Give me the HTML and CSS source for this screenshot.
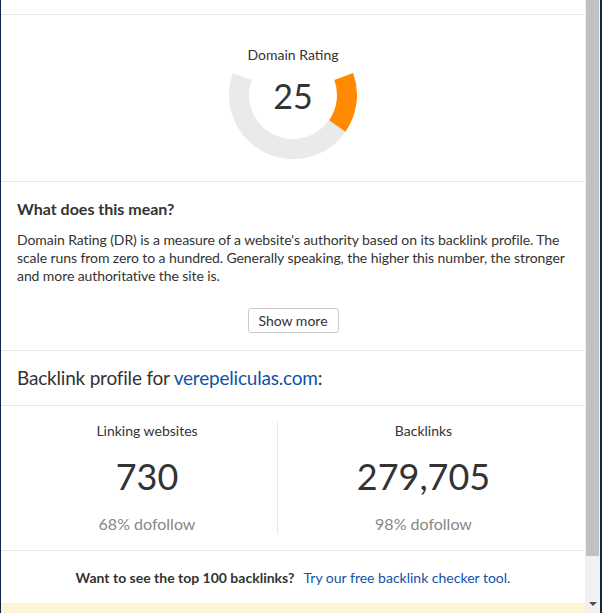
FILE: index.html
```html
<!DOCTYPE html>
<html lang="en">
<head>
<meta charset="utf-8">
<title>Domain Rating</title>
<link rel="stylesheet" href="styles.css">
</head>
<body>
<div class="frame">
  <div class="edge"></div>
  <main class="panel">
    <div class="prev-section"></div>

    <section class="dr">
      <div class="dr-label">Domain Rating</div>
      <div class="gauge">
        <svg class="gauge-svg" width="128" height="88" viewBox="0 40 128 88" aria-hidden="true">
          <path d="M108.24 94.97 A54 54 0 0 1 13.26 45.53" fill="none" stroke="#eaeaec" stroke-width="20"/>
          <path d="M114.74 45.53 A54 54 0 0 1 108.24 94.97" fill="none" stroke="#ff8a00" stroke-width="20"/>
        </svg>
        <div class="gauge-value">25</div>
      </div>
    </section>

    <section class="meaning">
      <h3 class="meaning-title">What does this mean?</h3>
      <p class="meaning-text">Domain Rating (DR) is a measure of a website's authority based on its backlink profile. The scale runs from zero to a hundred. Generally speaking, the higher this number, the stronger and more authoritative the site is.</p>
      <div class="more-row"><button class="more-btn" type="button">Show more</button></div>
    </section>

    <section class="profile">
      <h2 class="profile-title">Backlink profile for <a class="link" href="#">verepeliculas.com</a>:</h2>
    </section>

    <section class="stats">
      <div class="stat">
        <div class="stat-label">Linking websites</div>
        <div class="stat-value">730</div>
        <div class="stat-sub">68% dofollow</div>
      </div>
      <div class="stat stat-right">
        <div class="stat-label">Backlinks</div>
        <div class="stat-value">279,705</div>
        <div class="stat-sub">98% dofollow</div>
      </div>
    </section>

    <section class="cta">
      <span class="cta-q">Want to see the top 100 backlinks?</span>
      <a class="link cta-link" href="#">Try our free backlink checker tool.</a>
    </section>

    <div class="notice"></div>
  </main>
  <div class="scrollbar">
    <div class="thumb"></div>
    <div class="track"></div>
    <div class="arrow-btn"><span class="arrow"></span></div>
  </div>
  <div class="edge edge-right"></div>
</div>
</body>
</html>
```

FILE: styles.css
```css
* { box-sizing: border-box; }

html, body {
  margin: 0;
  padding: 0;
  height: 613px;
  overflow: hidden;
  background: #ffffff;
}

body {
  font-family: Lato, "Noto Sans", sans-serif;
  color: #333333;
  font-size: 14px;
}

.frame {
  display: flex;
  height: 613px;
}

.edge {
  width: 1px;
  flex: none;
  background: #0c2747;
}

.edge-right {
  width: 2px;
}

.panel {
  width: 584px;
  flex: none;
  display: flex;
  flex-direction: column;
  background: #ffffff;
}

.prev-section {
  height: 15px;
  flex: none;
  border-bottom: 1px solid #e8e8e8;
}

/* Domain rating */
.dr {
  flex: none;
  padding: 30px 16px 22px;
  border-bottom: 1px solid #e8e8e8;
  display: flex;
  flex-direction: column;
  align-items: center;
}

.dr-label {
  font-size: 14px;
  line-height: 20px;
  color: #333333;
}

.gauge {
  margin-top: 6px;
  display: grid;
  justify-items: center;
}

.gauge-svg,
.gauge-value {
  grid-area: 1 / 1;
}

.gauge-svg {
  display: block;
}

.gauge-value {
  align-self: start;
  margin-top: 8px;
  font-size: 34px;
  line-height: 34px;
  color: #333333;
}

/* What does this mean */
.meaning {
  flex: none;
  padding: 17px 16px 17px;
  border-bottom: 1px solid #e8e8e8;
}

.meaning-title {
  margin: 0;
  font-size: 16px;
  line-height: 20px;
  font-weight: 700;
  color: #333333;
}

.meaning-text {
  margin: 12px 0 0;
  font-size: 14px;
  line-height: 18px;
  letter-spacing: -0.08px;
  color: #333333;
}

.more-row {
  display: flex;
  justify-content: center;
  margin-top: 23px;
}

.more-btn {
  font-family: inherit;
  font-size: 14px;
  line-height: 23px;
  height: 25px;
  width: 91px;
  padding: 0;
  color: #333333;
  background: #ffffff;
  border: 1px solid #cccccc;
  border-radius: 3px;
}

/* Backlink profile */
.profile {
  flex: none;
  padding: 15px 16px 15px;
  border-bottom: 1px solid #e8e8e8;
}

.profile-title {
  margin: 0;
  font-size: 19px;
  line-height: 24px;
  font-weight: 400;
  letter-spacing: -0.2px;
  color: #333333;
}

.link {
  color: #0f52aa;
  text-decoration: none;
}

/* Stats */
.stats {
  flex: none;
  display: grid;
  grid-template-columns: 260px 1fr;
  padding: 16px 16px;
  border-bottom: 1px solid #e8e8e8;
}

.stat {
  display: flex;
  flex-direction: column;
  align-items: center;
}

.stat-right {
  border-left: 1px solid #e8e8e8;
}

.stat-label {
  font-size: 14px;
  line-height: 18px;
  color: #333333;
}

.stat-value {
  margin-top: 14px;
  font-size: 36px;
  line-height: 44px;
  color: #333333;
}

.stat-sub {
  margin-top: 16px;
  font-size: 16px;
  line-height: 20px;
  color: #888888;
}

/* CTA */
.cta {
  flex: none;
  padding: 18px 16px 16px;
  text-align: center;
  font-size: 14px;
  line-height: 18px;
}

.cta-q {
  font-weight: 700;
  color: #333333;
  margin-right: 6px;
}

.notice {
  flex: 1;
  background: #fdf4d3;
}

/* Scrollbar */
.scrollbar {
  width: 15px;
  flex: none;
  display: flex;
  flex-direction: column;
  background: #f1f1f1;
}

.thumb {
  height: 556px;
  margin: 0 1px;
  background: #c1c1c1;
  flex: none;
}

.track {
  flex: 1;
}

.arrow-btn {
  height: 14px;
  display: flex;
  justify-content: center;
  align-items: flex-start;
  padding-top: 3px;
}

.arrow {
  width: 0;
  height: 0;
  border-left: 4px solid transparent;
  border-right: 4px solid transparent;
  border-top: 4px solid #505050;
}
```
